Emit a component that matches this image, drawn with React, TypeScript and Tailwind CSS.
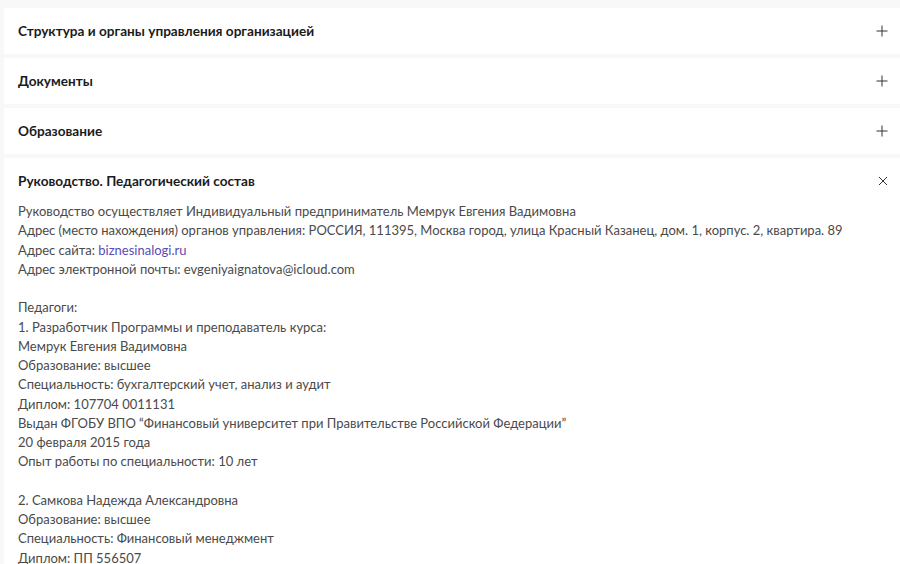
import React from 'react';

const font = { fontFamily: 'Lato, "Open Sans", "Liberation Sans", sans-serif' };

const PlusIcon = () => (
  <svg width="12" height="12" viewBox="0 0 12 12" className="text-[#333]">
    <path d="M6 0.5v11M0.5 6h11" stroke="currentColor" strokeWidth="1" fill="none" />
  </svg>
);

const CloseIcon = () => (
  <svg width="10" height="10" viewBox="0 0 10 10" className="text-[#333]">
    <path d="M1 1l8 8M9 1l-8 8" stroke="currentColor" strokeWidth="1" fill="none" />
  </svg>
);

const Header = ({ title, open }: { title: string; open?: boolean }) => (
  <div className="flex h-[46px] items-center justify-between pl-[14px] pr-[12px]">
    <span className="text-[13.6px] font-bold text-[#1b1b1b]">{title}</span>
    {open ? <CloseIcon /> : <PlusIcon />}
  </div>
);

const lines: (string | null)[] = [
  'Руководство осуществляет Индивидуальный предприниматель Мемрук Евгения Вадимовна',
  'Адрес (место нахождения) органов управления: РОССИЯ, 111395, Москва город, улица Красный Казанец, дом. 1, корпус. 2, квартира. 89',
  'SITE',
  'Адрес электронной почты: evgeniyaignatova@icloud.com',
  null,
  'Педагоги:',
  '1. Разработчик Программы и преподаватель курса:',
  'Мемрук Евгения Вадимовна',
  'Образование: высшее',
  'Специальность: бухгалтерский учет, анализ и аудит',
  'Диплом: 107704 0011131',
  'Выдан ФГОБУ ВПО “Финансовый университет при Правительстве Российской Федерации”',
  '20 февраля 2015 года',
  'Опыт работы по специальности: 10 лет',
  null,
  '2. Самкова Надежда Александровна',
  'Образование: высшее',
  'Специальность: Финансовый менеджмент',
  'Диплом: ПП 556507',
];

export default function App() {
  return (
    <div className="h-screen overflow-hidden bg-[#f8f8f8] pl-[4px] pt-[8px]" style={font}>
      <div className="flex flex-col gap-[4px]">
        <div className="bg-white">
          <Header title="Структура и органы управления организацией" />
        </div>
        <div className="bg-white">
          <Header title="Документы" />
        </div>
        <div className="bg-white">
          <Header title="Образование" />
        </div>
        <div className="bg-white pb-6">
          <Header title="Руководство. Педагогический состав" open />
          <div className="-mt-[2px] pl-[14px] text-[13px] leading-[19.25px] text-[#4a4a4a]">
            {lines.map((l, i) =>
              l === null ? (
                <div key={i} className="h-[19.25px]" />
              ) : l === 'SITE' ? (
                <div key={i}>
                  Адрес сайта: <a className="text-[#5a4bb8]">biznesinalogi.ru</a>
                </div>
              ) : (
                <div key={i}>{l}</div>
              )
            )}
          </div>
        </div>
      </div>
    </div>
  );
}
